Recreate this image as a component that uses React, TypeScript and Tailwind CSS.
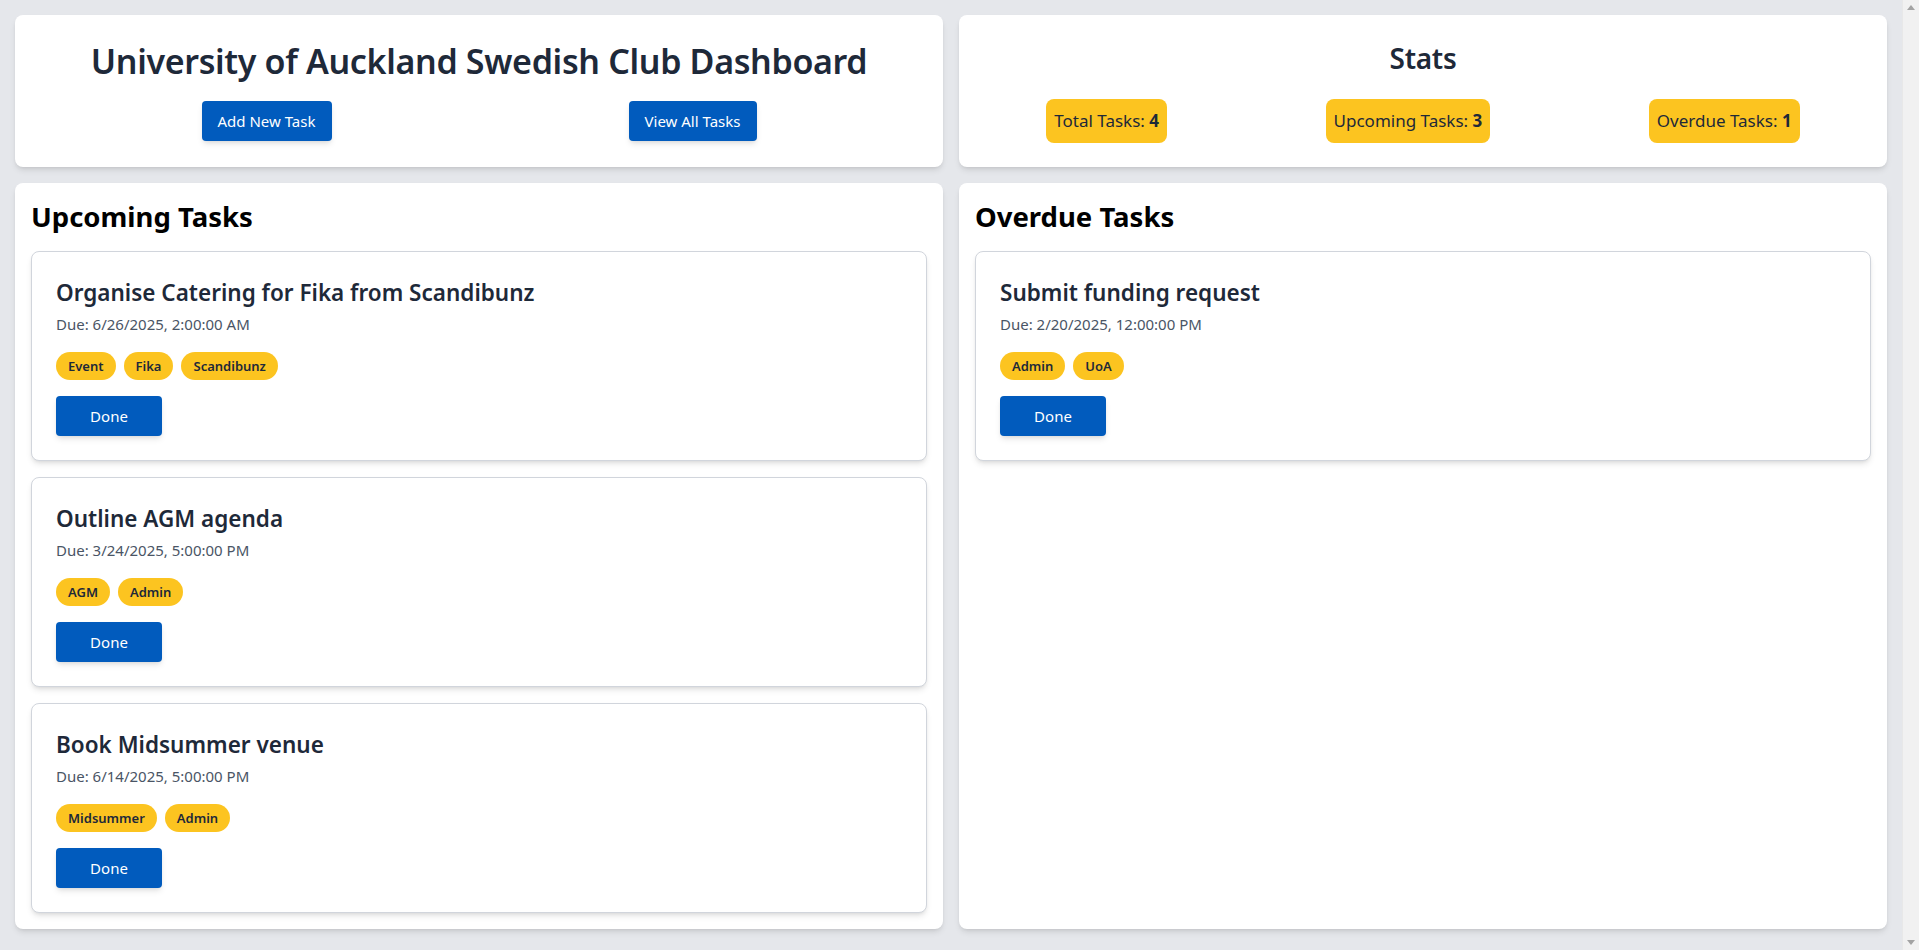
import React from "react";

type Task = { title: string; due: string; tags: string[] };

const upcoming: Task[] = [
  { title: "Organise Catering for Fika from Scandibunz", due: "Due: 6/26/2025, 2:00:00 AM", tags: ["Event", "Fika", "Scandibunz"] },
  { title: "Outline AGM agenda", due: "Due: 3/24/2025, 5:00:00 PM", tags: ["AGM", "Admin"] },
  { title: "Book Midsummer venue", due: "Due: 6/14/2025, 5:00:00 PM", tags: ["Midsummer", "Admin"] },
];

const overdue: Task[] = [
  { title: "Submit funding request", due: "Due: 2/20/2025, 12:00:00 PM", tags: ["Admin", "UoA"] },
];

function TaskCard({ task }: { task: Task }) {
  return (
    <div className="rounded-lg border border-gray-300 bg-white px-6 pt-[25px] pb-6 shadow-md">
      <h3 className="text-[22.5px] leading-8 font-semibold text-gray-800">{task.title}</h3>
      <p className="mt-[3px] text-[15px] leading-6 text-gray-600">{task.due}</p>
      <div className="mt-4 flex gap-2">
        {task.tags.map((t) => (
          <span key={t} className="rounded-full bg-[#fcc420] px-3 py-1 text-[13px] leading-5 font-semibold text-gray-800">
            {t}
          </span>
        ))}
      </div>
      <button className="mt-4 block h-10 w-[106px] rounded bg-[#015bbd] text-[15px] text-white shadow-md">Done</button>
    </div>
  );
}

function Section({ title, tasks, grow }: { title: string; tasks: Task[]; grow?: boolean }) {
  return (
    <div className={grow ? "h-full rounded-lg bg-white p-4 shadow-md" : "rounded-lg bg-white p-4 shadow-md"}>
      <h2 className="mb-4 text-[27.5px] leading-9 font-bold text-black">{title}</h2>
      <div className="flex flex-col gap-4">
        {tasks.map((t) => (
          <TaskCard key={t.title} task={t} />
        ))}
      </div>
    </div>
  );
}

function StatBadge({ label, value }: { label: string; value: number }) {
  return (
    <div className="rounded-lg bg-[#fcc420] px-2 py-2 text-[17px] leading-7 text-gray-800">
      {label}: <span className="font-bold">{value}</span>
    </div>
  );
}

export default function App() {
  return (
    <div className="flex min-h-screen bg-gray-200 font-['Noto_Sans',sans-serif]">
      <div className="min-w-0 flex-1">
        <div className="grid grid-cols-2 gap-4 p-[15px]">
          <div className="rounded-lg bg-white px-6 pt-[26px] pb-6 text-center shadow-md">
            <h1 className="text-[34px] leading-10 font-semibold tracking-[-0.01em] text-gray-800">
              University of Auckland Swedish Club Dashboard
            </h1>
            <div className="mt-5 flex justify-around px-[14px]">
              <button className="h-10 w-[130px] rounded bg-[#015bbd] text-[15px] text-white shadow-md">Add New Task</button>
              <button className="h-10 w-[128px] rounded bg-[#015bbd] text-[15px] text-white shadow-md">View All Tasks</button>
            </div>
          </div>
          <div className="rounded-lg bg-white px-2 pt-[25px] pb-6 text-center shadow-md">
            <h2 className="text-[28px] leading-9 font-semibold tracking-[-0.01em] text-gray-800">Stats</h2>
            <div className="mt-[23px] flex justify-around">
              <StatBadge label="Total Tasks" value={4} />
              <StatBadge label="Upcoming Tasks" value={3} />
              <StatBadge label="Overdue Tasks" value={1} />
            </div>
          </div>
          <Section title="Upcoming Tasks" tasks={upcoming} />
          <Section title="Overdue Tasks" tasks={overdue} grow />
        </div>
      </div>
      <div className="flex w-[17px] shrink-0 flex-col items-center justify-between border-l border-[#e8e8e8] bg-[#f1f1f1] py-1">
        <svg width="8" height="5" viewBox="0 0 8 5" className="mt-[1px]">
          <path d="M4 0 L8 5 L0 5 Z" fill="#a3a3a3" />
        </svg>
        <svg width="8" height="5" viewBox="0 0 8 5" className="mb-[1px]">
          <path d="M0 0 L8 0 L4 5 Z" fill="#a3a3a3" />
        </svg>
      </div>
    </div>
  );
}
